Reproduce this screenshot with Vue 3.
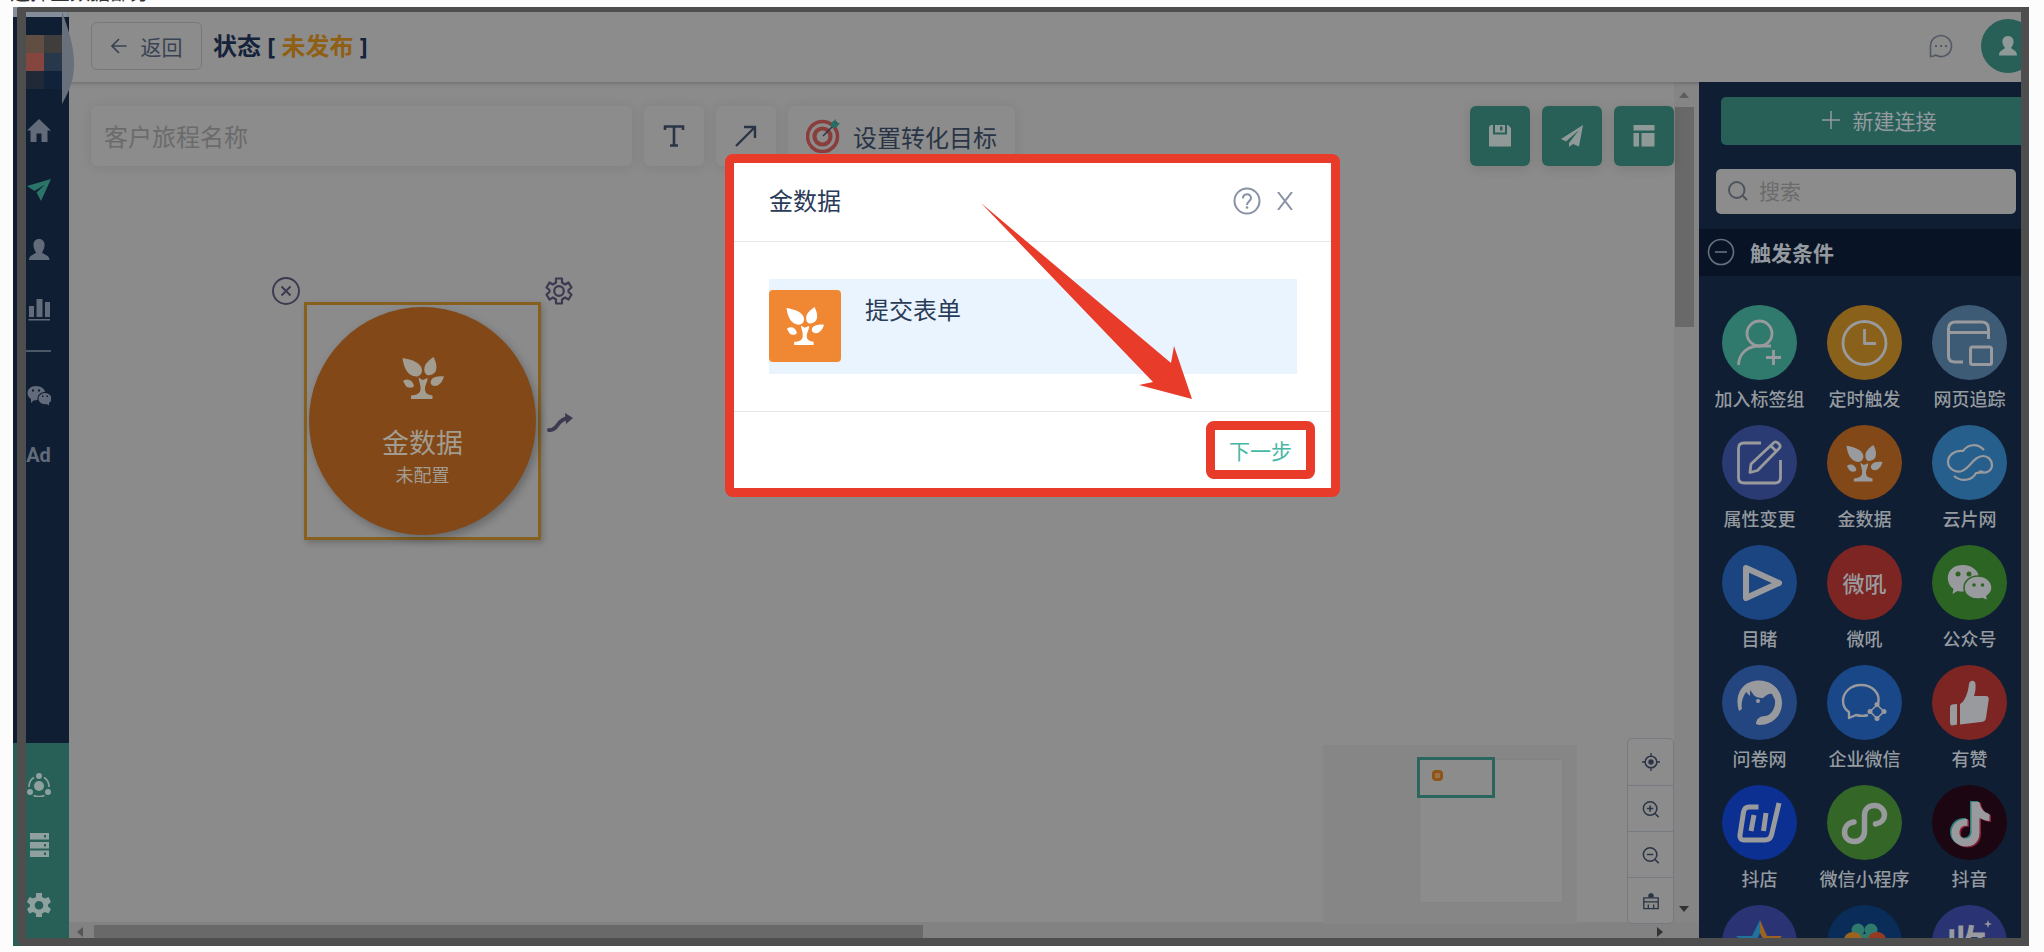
<script setup>
import { ref } from 'vue'

const journeyName = ref('')
const keyword = ref('')

const topLinks = [
  { name: '首页', icon: '<path fill="currentColor" d="M12 1 24 12.5h-3.5V24h-6v-8.500h-5V24h-6V12.500H0Z"/>' },
  { name: '旅程', active: true, icon: '<path fill="currentColor" d="M0 8 24 1 14 23 9.500 14.500 18 6.500 7.500 13Z"/>' },
  { name: '客户', icon: '<path fill="currentColor" d="M12 1c4 0 6 3 5.500 7-.3 3-1.500 5-2.500 6.500C17 17 22.500 17 22.500 22H2c0-5 5-5 7-7.500C8 13 6.800 11 6.500 8 6 4 8 1 12 1Z"/>' },
  { name: '报表', icon: '<path fill="currentColor" d="M2 8h5v11H2ZM9.500 1h6v18h-6ZM18 4h5v15h-5ZM1.500 21h21.500v1.500H1.500Z"/>' },
]
const wechat =
  '<path fill="currentColor" d="M9 3c5 0 9 3 9 6-4 0-8 2.500-7.500 8l-4 .5L4 20v-4C-2 12 0 3 9 3Z"/><path fill="currentColor" d="M18 10c3.500 0 6.500 2.500 6.500 5.500 0 2-1 3.500-2.500 4.500v2.500L19.500 21C15 22 11.500 19 11.500 15.500c0-3 3-5.500 6.500-5.500Z"/><path fill="#0f1e33" d="M5 6.500h2v2H5ZM11 6.500h2v2h-2ZM15 12.500h1.500V14H15ZM19.500 12.500H21V14h-1.500Z"/>'
const bottomLinks = [
  { name: '连接', icon: '<circle cx="12" cy="13" r="5" fill="currentColor"/><circle cx="12" cy="3" r="3" fill="currentColor"/><circle cx="3" cy="19" r="3" fill="currentColor"/><circle cx="21" cy="19" r="3" fill="currentColor"/><path d="M7 4.500Q2 7.500 2 14M17 4.500q5 3 5 9.500M6.500 22.500q5.500 2 11 0" fill="none" stroke="currentColor" stroke-width="1.600"/>' },
  { name: '数据', icon: '<path fill="currentColor" fill-rule="evenodd" d="M3 0h19v6.500H3ZM3 9h19v6.500H3ZM3 17.500h19V24H3ZM17 2v2.500h2V2ZM17 11v2.500h2V11ZM17 19.500V22h2v-2.500Z"/>' },
  { name: '设置', icon: '<path fill="currentColor" fill-rule="evenodd" d="M9 0h6v4l3 1.500L21.500 4 24 9l-3 2.500v2L24 16l-2.500 4.500L18 19l-3 1.500V24H9v-3.500L6 19l-3.500 1.500L0 16l3-2.500v-2L0 9l2.500-5L6 5.500 9 4ZM12 8a4.300 4.300 0 1 0 .01 0Z"/>' },
]

const tree =
  '<g fill="currentColor"><path d="M.5 1C10 2.500 19.500 6 20 13c0 4-2.500 6.500-6 6.500C6 19 2 12 .5 1Z"/><path d="M31.500 0c2.500 5 4 10 2 14.500-1.500 3-6 4.500-8.500 3.500-3-1.500-3.500-6.500-1.500-10.500C25.500 4.500 28 2.500 31.500 0Z"/><path d="M1 24c4-3 9.500-1.500 11 4.500-.5 3-7 3-8.500 0Z"/><path d="M42 19.500c-1.500 5-4 9-9 9.500-4 0-5.500-3.500-3.500-6.500 2-3 7.500-3.500 12.500-3Z"/><path d="m16.500 20.500 4 2.500 5-2c.5 3-2.500 7-2.500 11 0 3.500 1.500 5.500 7.500 6.500V42H9v-3.500c6-.5 9-2 9.500-6S17 25 16.500 20.500Z"/></g>'
const s = (w) => `fill="none" stroke="currentColor" stroke-width="${w}" stroke-linejoin="round"`
const note = 'M38 16h8c1 7 5 11 10 12v7c-4 0-7-1.500-10-3v15c0 19-28 17-28 0 0-9 7-15 16-14v7c-5-1-8 2-8 7 0 7 12 8 12-1Z'

const triggers = [
  { name: '加入标签组', tone: 'mint', icon: `<g ${s(2.8)}><circle cx="37.500" cy="28.500" r="12.500"/><path d="M16.500 60C17 48 26 41 37 41h12M44 52.500h15M51.500 45v15"/></g>` },
  { name: '定时触发', tone: 'amber', icon: `<g ${s(2.8)}><circle cx="37.500" cy="38" r="21.500"/><path d="M37.500 24v14.500H49"/></g>` },
  { name: '网页追踪', tone: 'steel', icon: `<g ${s(3)}><path d="M31 57h-8q-6.500 0-6.500-6V24q0-7 7-7h26q7 0 7 7v10M16.500 27.500h40"/><rect x="38.500" y="42" width="21" height="17.500" rx="2"/></g>` },
  { name: '属性变更', tone: 'indigo', icon: `<g ${s(2.8)}><path d="M39 18H22q-5.500 0-5.500 5.500v29q0 5.500 5.500 5.500h31q5.500 0 5.500-5.500V35"/><path d="m28 47.500 1-8.500 23-21.500q2-1.500 4 .5l1.500 1.500q1.500 2-.5 4L35.500 45.500ZM49 21l6 6"/></g>` },
  { name: '金数据', tone: 'orange', icon: `<g transform="translate(19 20) scale(.87)">${tree}</g>` },
  { name: '云片网', tone: 'sky', icon: `<g ${s(2.2)}><path d="M52 25c-7-7-16-6-21 1-8-1-15 4-15 11s8 11 14 9c8-3 12-15 21-15 5 0 9 4 9 9 0 6-7 10-13 6"/><path d="M22 51c7 6 18 5 22-3 4 0 6-1 7-2"/></g>` },
  { name: '目睹', tone: 'blue', icon: `<path d="M24 23 57 38 24 53Z" ${s(6)}/>` },
  { name: '微吼', tone: 'red', text: '微吼' },
  { name: '公众号', tone: 'green', icon: '<path fill="currentColor" d="M31 20c9 0 16 6 16 13S40 46.500 31 46.500c-2 0-4 0-5.500-.5l-5 3 1-5C12 37 14 20 31 20Z"/><path fill="currentColor" stroke="#2c6424" stroke-width="1.500" d="M46 31c8 0 14 5 14 12 0 3-2 6-5 8l.5 5-5-2.500C40 56 32 50 32 43s6-12 14-12Z"/><g fill="#2c6424"><circle cx="26" cy="29" r="2.500"/><circle cx="37" cy="29" r="2.500"/><circle cx="42" cy="40" r="1.800"/><circle cx="50.500" cy="40" r="1.800"/></g>' },
  { name: '问卷网', tone: 'royal', icon: '<path fill="currentColor" d="M17 46c-5-16 3-30.500 20-30.500C50 15.500 60 25 60 38S50 60 37 60l-3-1c0-5 4-8 9-8s11-7 10-16l-3-6c-4-1-6 2-9 4-5 0-8-1-10-4l-3-4v6l-4-4c-4 6-5 12-4 17Z"/><circle cx="36" cy="36" r="2" fill="currentColor"/>' },
  { name: '企业微信', tone: 'cobalt', icon: `<path d="M51 39c3-11-6-19-17-19s-18 8-18 16c0 5 3 9 6 11v6l7-3c4 1 9 1 12 0" ${s(2.4)}/><path d="m50 40 7 6.500-7 7-7-7Z" ${s(1.6)}/><g fill="currentColor"><circle cx="50" cy="39.500" r="2.500"/><circle cx="57" cy="46.500" r="2.500"/><circle cx="50" cy="53.500" r="2.500"/><circle cx="43" cy="46.500" r="2.500"/></g>` },
  { name: '有赞', tone: 'red', icon: '<path fill="currentColor" d="m20 39.500 5-.5v20.500l-5 1q-2-.5-2-3V42q0-2 2-2.500ZM28 39c5-3 8-11 9-20 1-4.500 6-4 6.500 0 .5 5-.5 9-1.500 12h12c3 0 3 3 2.500 5L54 53c-.5 3-3 4-5 4l-21 2.500Z"/>' },
  { name: '抖店', tone: 'ultra', icon: `<path d="M36.500 22H27q-4.500 0-5.500 5l-3.500 23q-.5 5 4 5h21q5 0 6.500-5L57 18M32 30l-3 16M44 28l-2.500 18" ${s(5)}/>` },
  { name: '微信小程序', tone: 'leaf', icon: `<path d="M27 37c-7 1-9.500 6-9.500 10 0 6 4.500 9.500 10 9.500s10-4 10-10V30c0-6 4.500-9.500 10-9.500s10 4 10 9.500c0 4-3 8-9 9" ${s(5.5)} stroke-linecap="round"/>` },
  { name: '抖音', tone: 'black', icon: `<path d="${note}" fill="#2f7f7c"/><path d="${note}" fill="#8a1d38" transform="translate(3 2)"/><path d="${note}" fill="currentColor" transform="translate(1.5 1)"/>` },
  { name: '', tone: 'violet', icon: '<path d="M38 15 30 31H14l14 12-5 18 15-10Z" fill="#23729a"/><path d="m38 15 7 16h15L48 43l5 18-15-10Z" fill="#9a6320"/><path d="m38 28-5 10 5 8 5-8Z" fill="#2a3475"/>' },
  { name: '', tone: 'deep', icon: '<g fill="#2f7a6d"><circle cx="31" cy="25" r="6.500"/><circle cx="44" cy="25" r="6.500"/><path d="m26 29 11 13 12-13Z"/></g><ellipse cx="26" cy="35" rx="9" ry="8" fill="#9a6320"/><ellipse cx="50" cy="35" rx="9" ry="8" fill="#963a22"/>' },
  { name: '', tone: 'violet', icon: '<text x="14" y="54" font-size="40" font-weight="700" fill="currentColor">收</text><path fill="currentColor" d="m56 15 1 3 3 1-3 1-1 3-1-3-3-1 3-1Z"/>' },
]

const viewTools = [
  { name: '定位', icon: '<circle cx="10" cy="10" r="6.500" fill="none" stroke="currentColor" stroke-width="1.700"/><circle cx="10" cy="10" r="3" fill="currentColor"/><path d="M10 0v4M10 16v4M0 10h4M16 10h4" stroke="currentColor" stroke-width="1.500"/>' },
  { name: '放大', icon: '<g fill="none" stroke="currentColor" stroke-width="1.700"><circle cx="9" cy="9.500" r="7.500"/><path d="m14.500 15 4 4M9 6v7M5.500 9.500h7"/></g>' },
  { name: '缩小', icon: '<g fill="none" stroke="currentColor" stroke-width="1.700"><circle cx="9" cy="9.500" r="7.500"/><path d="m14.500 15 4 4M5.500 9.500h7"/></g>' },
  { name: '清空', icon: '<g fill="none" stroke="currentColor" stroke-width="1.500"><path d="M2 6.500h16v12H2ZM2 11h16M7 18v-4M13 18v-4"/></g><path d="M7 6V3q3-4 6 0v3Z" fill="currentColor"/>' },
]
</script>

<template>
  <div class="page">
    <p class="caption">选择金数据部分</p>

    <div class="frame">
      <nav class="sidebar">
        <div class="logo" aria-hidden="true">
          <i class="c1"></i><i class="c2"></i><i class="c3"></i><i class="c4"></i><i class="c5"></i><i class="c6"></i>
        </div>
        <div class="links">
          <a v-for="l in topLinks" :key="l.name" href="#" :class="{ active: l.active }" :aria-label="l.name">
            <svg viewBox="0 0 24 24" v-html="l.icon"></svg>
          </a>
          <hr />
          <a href="#" class="after" aria-label="微信"><svg viewBox="0 0 24 24" v-html="wechat"></svg></a>
          <a href="#" class="ad">Ad</a>
        </div>
        <div class="links bottom">
          <a v-for="l in bottomLinks" :key="l.name" href="#" :aria-label="l.name">
            <svg viewBox="0 0 24 24" v-html="l.icon"></svg>
          </a>
        </div>
      </nav>
      <svg class="bulge" viewBox="0 0 12 92" aria-hidden="true"><path d="M0 0 2 5C6 17 12 34 12 51S8 77 0 92Z" fill="#67707b" /></svg>

      <div class="main">
        <header class="header">
          <button class="back" type="button">
            <svg viewBox="0 0 16 16"><path d="M15.500 8H1M8 1 1 8l7 7" fill="none" stroke="currentColor" stroke-width="1.700" /></svg>
            返回
          </button>
          <h1>状态 [ <span>未发布</span> ]</h1>
          <button class="chat" type="button" aria-label="消息">
            <svg viewBox="0 0 24 24"><path d="M1.500 22.500V12a10.500 10.500 0 1 1 5 9l-1.500 1Z" fill="none" stroke="currentColor" stroke-width="1.600" /><path d="M6 11h2v2H6ZM11 11h2v2h-2ZM16 11h2v2h-2Z" fill="currentColor" /></svg>
          </button>
          <button class="avatar" type="button" aria-label="账户">
            <svg viewBox="0 0 18 20"><path d="M9 0c4 0 6 3 5.500 6.500-.3 2.500-1.500 4-2.500 5.500 2 2 6 2.500 6 7.500H0c0-5 4-5.500 6-7.500-1-1.500-2.200-3-2.500-5.500C3 3 5 0 9 0Z" fill="currentColor" /></svg>
          </button>
        </header>

        <div class="body">
          <section class="stage">
            <div class="canvas">
              <div class="toolbar">
                <input v-model="journeyName" class="tile name" type="text" placeholder="客户旅程名称" aria-label="客户旅程名称" />
                <button class="tile square" type="button" aria-label="文本">
                  <svg viewBox="0 0 22 22"><path d="M2 5V1.500h18V5M11 1.500v19M7 20.500h8" fill="none" stroke="currentColor" stroke-width="2.600" /></svg>
                </button>
                <button class="tile square" type="button" aria-label="连线">
                  <svg viewBox="0 0 22 22"><path d="M1 21 20 2M9 2h11v11" fill="none" stroke="currentColor" stroke-width="2.400" /></svg>
                </button>
                <button class="tile goal" type="button">
                  <svg viewBox="0 0 34 34">
                    <circle cx="16.500" cy="17.500" r="15" fill="none" stroke="#8a3e3c" stroke-width="3.600" />
                    <circle cx="16.500" cy="17.500" r="8" fill="none" stroke="#8a3e3c" stroke-width="4.200" />
                    <path d="m17 17 14-14" stroke="#29333f" stroke-width="1.400" />
                    <path d="M25 8V4l5-4v4h4l-4 5Z" fill="#236f63" />
                  </svg>
                  设置转化目标
                </button>
                <div class="actions">
                  <button type="button" aria-label="保存">
                    <svg viewBox="0 0 22 22"><path d="M1.500 0H4v9.500h14V0h1l3 3v18.500H0V2ZM6 0h10v7.500H6ZM11 1.500v4h2.500v-4Z" fill="currentColor" fill-rule="evenodd" /></svg>
                  </button>
                  <button type="button" aria-label="发布">
                    <svg viewBox="0 0 22 22"><path d="M22 0 0 14l5 2.500L18 5 8 18v4l4-3 6 2.500Z" fill="currentColor" /></svg>
                  </button>
                  <button type="button" aria-label="模板">
                    <svg viewBox="0 0 22 22"><path d="M.5 0h21v5.500H.5ZM.5 8H6v13.500H.5ZM8.500 8h13v13.500h-13Z" fill="currentColor" /></svg>
                  </button>
                </div>
              </div>

              <div class="node">
                <button class="corner close" type="button" aria-label="删除">
                  <svg viewBox="0 0 28 28"><g fill="none" stroke="currentColor" stroke-width="1.900"><circle cx="14" cy="14" r="13" /><path d="m9.500 9.500 9 9M18.500 9.500l-9 9" /></g></svg>
                </button>
                <button class="corner config" type="button" aria-label="配置">
                  <svg viewBox="0 0 28 28"><g fill="none" stroke="currentColor" stroke-width="2.200" stroke-linejoin="round"><path d="M11 1.500h6v4l3 2 3.500-2 3 5-3 2.500v2l3 2.500-3 5-3.500-2-3 2v4h-6v-4l-3-2-3.500 2-3-5 3-2.500v-2l-3-2.500 3-5 3.500 2 3-2Z" /><circle cx="14" cy="14" r="4.800" /></g></svg>
                </button>
                <button class="corner link" type="button" aria-label="连接节点">
                  <svg viewBox="0 0 26 20"><path d="M2 17c9 1 8-11 19-12" fill="none" stroke="currentColor" stroke-width="3.800" stroke-linecap="round" /><path d="m18 0 8 5-7 6Z" fill="currentColor" /></svg>
                </button>
                <div class="disc">
                  <svg viewBox="0 0 42 42" v-html="tree"></svg>
                  <strong>金数据</strong>
                  <small>未配置</small>
                </div>
              </div>

              <div class="minimap">
                <div class="sheet"></div>
                <div class="viewport"><i></i></div>
              </div>
              <div class="zoomer">
                <button v-for="t in viewTools" :key="t.name" type="button" :aria-label="t.name">
                  <svg viewBox="0 0 20 20" v-html="t.icon"></svg>
                </button>
              </div>
            </div>
            <div class="vbar"><i class="up"></i><i class="thumb"></i><i class="down"></i></div>
            <div class="hbar"><i class="left"></i><i class="thumb"></i><i class="right"></i></div>
          </section>

          <aside class="panel">
            <button class="create" type="button">
              <svg viewBox="0 0 18 18"><path d="M9 0v18M0 9h18" stroke="currentColor" stroke-width="1.500" /></svg>
              新建连接
            </button>
            <label class="search">
              <svg viewBox="0 0 20 20"><path d="m14 14 5 5M16.500 9A7.700 8 0 1 1 1 9a7.700 8 0 0 1 15.500 0Z" fill="none" stroke="currentColor" stroke-width="1.900" /></svg>
              <input v-model="keyword" type="search" placeholder="搜索" aria-label="搜索" />
            </label>
            <h2>
              <svg viewBox="0 0 28 28"><g fill="none" stroke="currentColor" stroke-width="1.600"><circle cx="14" cy="14" r="12.500" /><path d="M8 14h12" /></g></svg>
              触发条件
            </h2>
            <div class="grid">
              <button v-for="(t, i) in triggers" :key="i" type="button">
                <span class="badge" :class="t.tone">
                  <template v-if="t.text">{{ t.text }}</template>
                  <svg v-else viewBox="0 0 75 75" v-html="t.icon"></svg>
                </span>
                {{ t.name }}
              </button>
            </div>
          </aside>
        </div>
      </div>

      <div class="outline"></div>

      <div class="overlay">
        <div class="modal" role="dialog" aria-labelledby="dialog-title">
          <div class="modal-head">
            <h3 id="dialog-title">金数据</h3>
            <button type="button" aria-label="帮助">
              <svg class="help" viewBox="0 0 28 28"><g fill="none" stroke="currentColor" stroke-width="2"><circle cx="14" cy="14" r="12.500" /><path d="M10 11.500c0-5.500 8-5.500 8-.5 0 3-4 3.500-4 7" /></g><circle cx="14" cy="20.500" r="1.300" fill="currentColor" /></svg>
            </button>
            <button type="button" aria-label="关闭">
              <svg class="x" viewBox="0 0 18 18"><path d="m2 0 14 18M16 0 2 18" fill="none" stroke="currentColor" stroke-width="2" /></svg>
            </button>
          </div>
          <div class="modal-body">
            <button class="option" type="button">
              <span class="thumb"><svg viewBox="0 0 42 42" v-html="tree"></svg></span>
              提交表单
            </button>
          </div>
          <div class="modal-foot"><button type="button">下一步</button></div>
          <svg class="pointer" viewBox="0 0 212 197" aria-hidden="true"><path d="M0 0 190 160 193 143 211 196 158 182 172 179Z" fill="#e83b2a" /></svg>
        </div>
      </div>
    </div>
  </div>
</template>

<style>
body {
  margin: 0;
  background: #fcfcfc;
}
</style>

<style scoped>
* {
  box-sizing: border-box;
}
.page {
  position: relative;
  display: flex;
  flex-direction: column;
  height: 100vh;
  min-height: 700px;
  padding: 7px 15px 6px 13px;
  overflow: hidden;
  font-family: "Noto Sans", "Noto Sans CJK SC", sans-serif;
  color: #1c2a40;
}
button,
input {
  font: inherit;
  color: inherit;
  border: 0;
  padding: 0;
  margin: 0;
  background: none;
}
button {
  display: flex;
  align-items: center;
  justify-content: center;
}
svg {
  display: block;
  flex: none;
}
h1,
h2,
h3,
p {
  margin: 0;
}
.caption {
  position: absolute;
  left: 10px;
  top: -19px;
  font-size: 20px;
  line-height: 24px;
  color: #333;
}
.frame {
  position: relative;
  flex: 1;
  min-height: 0;
  display: flex;
  overflow: hidden;
  background: #8b8b8b;
}
.outline {
  position: absolute;
  inset: 0 0 0 4px;
  z-index: 3;
  border: solid #4e4e4e;
  border-width: 5px 8px 8px 9px;
  border-radius: 2px 0 0 6px;
  pointer-events: none;
}

/* sidebar */
.sidebar {
  flex: none;
  width: 56px;
  display: flex;
  flex-direction: column;
  background: #0f1e33;
  color: #626b79;
}
.logo {
  display: grid;
  grid-template-columns: 18px 18px;
  grid-auto-rows: 18px;
  height: 93px;
  padding: 18px 0 0 13px;
  border-top: 10px solid #858d9b;
  flex: none;
}
.c1 { background: #614e42; }
.c2 { background: #3f3e3c; }
.c3 { background: #84463f; }
.c4 { background: #263849; }
.c5 { background: #202935; }
.c6 { background: #10233a; }
.bulge {
  position: absolute;
  left: 49px;
  top: 5px;
  z-index: 2;
  width: 12px;
  height: 92px;
}
.links {
  display: flex;
  flex-direction: column;
  padding-left: 13px;
}
.links a {
  display: flex;
  align-items: center;
  justify-content: center;
  width: 25px;
  height: 60px;
  color: inherit;
  text-decoration: none;
}
.links a.active {
  color: #2a7468;
}
.links svg {
  width: 24px;
  height: 24px;
}
.links hr {
  width: 25px;
  height: 2px;
  margin: 10px 0 13px;
  border: 0;
  background: #4d5867;
}
.links .ad {
  font: bold 20px/60px Roboto, sans-serif;
}
.bottom {
  margin-top: auto;
  height: 203px;
  padding-top: 12px;
  background: #286058;
  color: #8fa19e;
}

/* header */
.main {
  flex: 1;
  min-width: 0;
  display: flex;
  flex-direction: column;
  padding: 5px 8px 8px 0;
}
.header {
  position: relative;
  flex: none;
  display: flex;
  align-items: center;
  height: 70px;
  padding: 0 0 2px 22px;
  background: #8c8c8c;
  box-shadow: 0 1px 4px rgba(0, 0, 0, 0.25);
  overflow: hidden;
}
.back {
  width: 111px;
  height: 48px;
  gap: 14px;
  border: 1px solid #787878;
  border-radius: 6px;
  font-size: 21px;
  color: #3a4352;
}
.back svg {
  width: 16px;
  height: 16px;
}
h1 {
  margin-left: 11px;
  font-size: 24px;
  line-height: 32px;
  font-weight: 700;
  color: #14233a;
}
h1 span {
  color: #8f5f14;
}
.chat {
  margin-left: auto;
  color: #525966;
}
.chat svg {
  width: 24px;
  height: 24px;
}
.avatar {
  flex: none;
  width: 54px;
  height: 54px;
  margin: 0 -14px 0 28px;
  border-radius: 50%;
  background: #286058;
  color: #8f9a98;
}
.avatar svg {
  width: 18px;
  height: 20px;
}

/* stage */
.body {
  flex: 1;
  min-height: 0;
  display: flex;
}
.stage {
  flex: 1;
  min-width: 0;
  display: grid;
  grid-template-columns: 1fr 25px;
  grid-template-rows: 1fr 16px;
}
.canvas {
  position: relative;
  z-index: 1;
}
.toolbar {
  display: flex;
  gap: 12px;
  padding: 24px 0 0 22px;
}
.tile {
  height: 60px;
  border-radius: 6px;
  background: #8c8c8c;
  box-shadow: 0 1px 12px rgba(0, 0, 0, 0.09);
  color: #293446;
}
.name {
  width: 541px;
  padding: 0 13px;
  font-size: 24px;
}
.name::placeholder {
  color: #6b6b6b;
  opacity: 1;
}
.square {
  width: 60px;
}
.square svg {
  width: 22px;
  height: 22px;
}
.goal {
  gap: 13px;
  padding: 0 18px;
  font-size: 24px;
}
.goal svg {
  width: 34px;
  height: 34px;
}
.actions {
  display: flex;
  gap: 12px;
  margin-left: auto;
}
.actions button {
  width: 60px;
  height: 60px;
  border-radius: 6px;
  background: #286058;
  color: #8f9a98;
  box-shadow: 0 2px 12px rgba(0, 0, 0, 0.12);
}
.actions svg {
  width: 22px;
  height: 22px;
}
.node {
  position: absolute;
  left: 235px;
  top: 220px;
  padding: 2px;
  border: 3px solid #87601e;
  box-shadow: 2px 3px 6px rgba(0, 0, 0, 0.2);
}
.disc {
  display: flex;
  flex-direction: column;
  align-items: center;
  width: 227px;
  height: 228px;
  padding-top: 50px;
  border-radius: 50%;
  background: #824817;
  color: #a39c91;
  box-shadow: 3px 4px 8px rgba(0, 0, 0, 0.25);
}
.disc svg {
  width: 42px;
  height: 42px;
}
.disc strong {
  margin-top: 24px;
  font-size: 27px;
  line-height: 40px;
  font-weight: 400;
}
.disc small {
  font-size: 18px;
  line-height: 24px;
}
.corner {
  position: absolute;
  color: #3c3950;
}
.corner svg {
  width: 28px;
  height: 28px;
}
.close {
  left: -35px;
  top: -28px;
}
.config {
  right: -35px;
  top: -28px;
}
.link {
  right: -35px;
  top: 108px;
}
.link svg {
  width: 26px;
  height: 20px;
}
.minimap {
  position: absolute;
  right: 97px;
  bottom: -2px;
  width: 254px;
  height: 179px;
  background: #868686;
}
.sheet {
  position: absolute;
  left: 96px;
  top: 14px;
  width: 144px;
  height: 144px;
  background: #8c8c8c;
  border: 1px solid #838383;
}
.viewport {
  position: absolute;
  left: 94px;
  top: 12px;
  width: 78px;
  height: 41px;
  padding: 10px 12px;
  border: 3px solid #2a665d;
}
.viewport i {
  display: block;
  width: 11px;
  height: 11px;
  border: 3px solid #8f5516;
  border-radius: 4px;
  background: #9a7448;
}
.zoomer {
  position: absolute;
  right: 0;
  bottom: -2px;
  width: 47px;
  border: 1px solid #757980;
  border-radius: 5px;
  background: #8c8c8c;
  color: #2b3546;
}
.zoomer button {
  width: 100%;
  height: 46px;
}
.zoomer button + button {
  border-top: 1px solid #757980;
}
.zoomer svg {
  width: 18px;
  height: 18px;
}
.vbar {
  display: flex;
  flex-direction: column;
  align-items: center;
  padding: 10px 5px 10px 0;
  background: #858585;
}
.vbar .thumb {
  width: 19px;
  height: 220px;
  margin-top: 9px;
  background: #696969;
}
.up,
.down,
.left,
.right {
  border: 5px solid transparent;
}
.up {
  border-top: 0;
  border-bottom: 6px solid #5d5d5d;
}
.down {
  margin-top: auto;
  border-bottom: 0;
  border-top: 6px solid #333;
}
.hbar {
  grid-column: 1 / 3;
  display: flex;
  align-items: center;
  padding: 3px 36px 0 8px;
  background: #828282;
}
.hbar .thumb {
  flex: 0 0 829px;
  height: 13px;
  margin-left: 11px;
  background: #696969;
}
.left {
  border-left: 0;
  border-right: 6px solid #555;
}
.right {
  margin-left: auto;
  border-right: 0;
  border-left: 6px solid #333;
}

/* connector panel */
.panel {
  position: relative;
  flex: none;
  width: 322px;
  display: flex;
  flex-direction: column;
  background: #0f1e33;
  color: #949a9f;
  overflow: hidden;
}
.create {
  flex: none;
  height: 48px;
  margin: 15px -16px 0 22px;
  padding-bottom: 2px;
  gap: 13px;
  border-radius: 5px;
  background: #286058;
  font-size: 21px;
}
.create svg {
  width: 18px;
  height: 18px;
}
.search {
  flex: none;
  display: flex;
  align-items: center;
  gap: 11px;
  height: 45px;
  margin: 24px 5px 15px 17px;
  padding: 0 12px 2px;
  border-radius: 5px;
  background: #8c8c8c;
  color: #4d535e;
}
.search svg {
  width: 20px;
  height: 20px;
}
.search input {
  flex: 1;
  min-width: 0;
  font-size: 21px;
}
.search input::placeholder {
  color: #6b6b6b;
  opacity: 1;
}
h2 {
  flex: none;
  display: flex;
  align-items: center;
  gap: 15px;
  height: 47px;
  padding: 0 0 2px 8px;
  background: #081426;
  font-size: 21px;
  font-weight: 700;
}
h2 svg {
  width: 28px;
  height: 28px;
  color: #68707d;
}
.grid {
  flex: none;
  display: grid;
  grid-template-columns: repeat(3, 105px);
  grid-auto-rows: 120px;
  padding: 29px 0 0 8px;
  margin-right: -1px;
}
.grid button {
  flex-direction: column;
  justify-content: flex-start;
  gap: 6px;
  font-size: 18px;
  font-weight: 500;
  line-height: 26px;
}
.badge {
  display: flex;
  align-items: center;
  justify-content: center;
  flex: none;
  width: 75px;
  height: 75px;
  border-radius: 50%;
  font-size: 22px;
  color: #999a9d;
}
.badge svg {
  width: 75px;
  height: 75px;
}
.mint { background: #2f7a6d; }
.amber { background: #8a611b; }
.steel { background: #3e5b76; }
.indigo { background: #2a3a73; }
.orange { background: #824817; }
.sky { background: #275f8c; }
.blue { background: #1a4580; }
.red { background: #7c2522; }
.green { background: #2c6424; }
.royal { background: #234580; }
.cobalt { background: #194788; }
.ultra { background: #0b3091; }
.leaf { background: #346628; }
.black { background: #1b0611; }
.violet { background: #2a3475; }
.deep { background: #0a2c58; }

/* dialog */
.overlay {
  position: absolute;
  inset: 0;
  z-index: 5;
  display: flex;
  justify-content: center;
  align-items: flex-start;
  padding: 147px 0 0 23px;
}
.modal {
  position: relative;
  width: 615px;
  border: 9px solid #e83b2a;
  border-radius: 8px;
  background: #fff;
}
.modal-head {
  display: flex;
  align-items: center;
  gap: 15px;
  height: 79px;
  padding: 0 37px 3px 35px;
  border-bottom: 1px solid #e4e8ea;
  color: #8792a5;
}
h3 {
  margin-right: auto;
  font-size: 24px;
  line-height: 32px;
  font-weight: 400;
  color: #2a3b57;
}
.help {
  width: 28px;
  height: 28px;
}
.x {
  width: 18px;
  height: 18px;
}
.modal-body {
  padding: 37px 34px 37px 35px;
}
.option {
  align-items: flex-start;
  justify-content: flex-start;
  gap: 24px;
  width: 100%;
  height: 95px;
  padding: 11px 0;
  background: #e9f4fe;
  font-size: 24px;
  line-height: 40px;
  color: #2a3b57;
}
.option .thumb {
  display: flex;
  align-items: center;
  justify-content: center;
  width: 72px;
  height: 72px;
  border-radius: 4px;
  background: #ef8733;
  color: #fff;
}
.option svg {
  width: 38px;
  height: 38px;
}
.modal-foot {
  display: flex;
  justify-content: flex-end;
  height: 77px;
  padding: 9px 16px;
  border-top: 1px solid #e4e8ea;
}
.modal-foot button {
  width: 109px;
  height: 58px;
  border: 9px solid #e83b2a;
  border-radius: 8px;
  font-size: 21px;
  color: #45b8a5;
}
.pointer {
  position: absolute;
  left: 247px;
  top: 40px;
  width: 212px;
  height: 197px;
  pointer-events: none;
}
</style>
